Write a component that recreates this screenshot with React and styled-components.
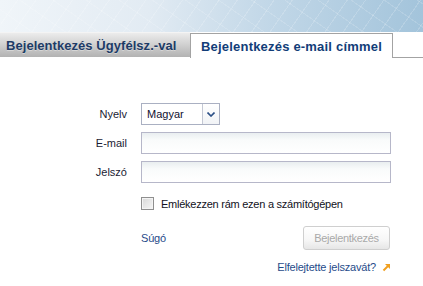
import React from "react";
import styled, { createGlobalStyle } from "styled-components";

const GlobalStyle = createGlobalStyle`
  body {
    margin: 0;
    background: #ffffff;
    font-family: "Liberation Sans", Arial, sans-serif;
  }
`;

const Page = styled.div`
  width: 423px;
  height: 286px;
  overflow: hidden;
  background: #ffffff;
`;

const Header = styled.div`
  height: 32px;
  background:
    repeating-linear-gradient(125deg, rgba(255, 255, 255, 0) 0 14px, rgba(255, 255, 255, 0.18) 14px 15px),
    repeating-linear-gradient(35deg, rgba(255, 255, 255, 0) 0 18px, rgba(255, 255, 255, 0.15) 18px 19px),
    linear-gradient(90deg, #f0f5f9 0%, #e2ebf3 35%, #c3d8e8 62%, #a3c4db 100%);
`;

const TabBar = styled.div`
  display: flex;
  height: 26px;
`;

const Tab = styled.div`
  box-sizing: border-box;
  height: 25px;
  display: flex;
  align-items: center;
  font-size: 13px;
  font-weight: bold;
  white-space: nowrap;
  color: ${(p) => (p.$active ? "#123d78" : "#1d3b66")};
  padding: ${(p) => (p.$active ? "0 10px" : "0 6px")};
  letter-spacing: ${(p) => (p.$active ? "0.2px" : "0.05px")};
  margin-top: ${(p) => (p.$active ? "1px" : "0")};
  width: ${(p) => (p.$active ? "203px" : "190px")};
  background: ${(p) =>
    p.$active ? "#ffffff" : "linear-gradient(180deg, #ececec 0%, #d2d2d2 45%, #b2b2b2 100%)"};
  border: ${(p) => (p.$active ? "1px solid #a3a3a3" : "none")};
  border-bottom: none;
  border-top: ${(p) => (p.$active ? "1px solid #a3a3a3" : "1px solid #f4f4f4")};
  text-shadow: ${(p) => (p.$active ? "none" : "0 1px 0 rgba(255,255,255,0.35)")};
`;

const TabFill = styled.div`
  flex: 1;
  border-bottom: 1px solid #a3a3a3;
`;

const Form = styled.div`
  display: grid;
  grid-template-columns: 127px 250px;
  column-gap: 14px;
  margin-top: 45px;
  font-size: 11px;
`;

const Label = styled.div`
  text-align: right;
  align-self: center;
  color: #1b1b33;
  margin-top: ${(p) => p.$top || 0}px;
`;

const Cell = styled.div`
  display: flex;
  align-items: center;
  margin-top: ${(p) => p.$top || 0}px;
  justify-content: ${(p) => p.$justify || "flex-start"};
`;

const Select = styled.div`
  box-sizing: border-box;
  width: 79px;
  height: 22px;
  border: 1px solid #aab0c2;
  display: flex;
  background: #ffffff;
`;

const SelectValue = styled.div`
  flex: 1;
  display: flex;
  align-items: center;
  padding-left: 5px;
  font-size: 11px;
  color: #101030;
`;

const SelectButton = styled.div`
  width: 16px;
  border-left: 1px solid #c4c8d4;
  display: flex;
  align-items: center;
  justify-content: center;
  background: linear-gradient(180deg, #ffffff, #f1f3f6);
`;

const Input = styled.input`
  box-sizing: border-box;
  width: 250px;
  height: 22px;
  border: 1px solid #b6b7c9;
  background: linear-gradient(180deg, #e9eef0 0%, #f9fbfb 35%, #ffffff 100%);
  outline: none;
  padding: 0 4px;
  margin: 0;
`;

const CheckRow = styled.label`
  display: flex;
  align-items: center;
  gap: 7px;
  font-size: 11px;
  letter-spacing: -0.25px;
  color: #111122;
`;

const Checkbox = styled.span`
  box-sizing: border-box;
  width: 13px;
  height: 13px;
  border: 1px solid #8f8f8f;
  background: linear-gradient(135deg, #d8d8d8, #f6f6f6);
  box-shadow: inset 0 0 0 1px #f4f4f4;
`;

const Link = styled.a`
  color: #1f4b8a;
  font-size: 11px;
  letter-spacing: -0.2px;
  text-decoration: none;
  display: flex;
  align-items: center;
  gap: 6px;
`;

const Button = styled.button`
  box-sizing: border-box;
  width: 87px;
  height: 24px;
  border: 1px solid #cfcfcf;
  border-radius: 3px;
  background: linear-gradient(180deg, #ffffff 0%, #f6f6f6 60%, #e6e6e6 100%);
  color: #a9a9a9;
  font-family: "Liberation Sans", Arial, sans-serif;
  font-size: 11px;
  letter-spacing: -0.3px;
  padding: 0;
  margin-right: 1px;
`;

export default function App() {
  return (
    <Page>
      <GlobalStyle />
      <Header />
      <TabBar>
        <Tab>Bejelentkezés Ügyfélsz.-val</Tab>
        <Tab $active>Bejelentkezés e-mail címmel</Tab>
        <TabFill />
      </TabBar>
      <Form>
        <Label>Nyelv</Label>
        <Cell>
          <Select>
            <SelectValue>Magyar</SelectValue>
            <SelectButton>
              <svg width="8" height="5" viewBox="0 0 8 5">
                <path d="M0.5 0.5 L4 4 L7.5 0.5" fill="none" stroke="#2b4f86" strokeWidth="1.6" />
              </svg>
            </SelectButton>
          </Select>
        </Cell>
        <Label $top={7}>E-mail</Label>
        <Cell $top={7}>
          <Input type="text" />
        </Cell>
        <Label $top={7}>Jelszó</Label>
        <Cell $top={7}>
          <Input type="password" />
        </Cell>
        <div />
        <Cell $top={14}>
          <CheckRow>
            <Checkbox />
            Emlékezzen rám ezen a számítógépen
          </CheckRow>
        </Cell>
        <div />
        <Cell $top={16} $justify="space-between">
          <Link href="#">Súgó</Link>
          <Button disabled>Bejelentkezés</Button>
        </Cell>
        <div />
        <Cell $top={11} $justify="flex-end">
          <Link href="#">
            Elfelejtette jelszavát?
            <svg width="9" height="9" viewBox="0 0 9 9">
              <path d="M1.5 7.5 L7 2" stroke="#f0a020" strokeWidth="2" fill="none" />
              <path d="M3 1 H8 V6 Z" fill="#f0a020" />
            </svg>
          </Link>
        </Cell>
      </Form>
    </Page>
  );
}
